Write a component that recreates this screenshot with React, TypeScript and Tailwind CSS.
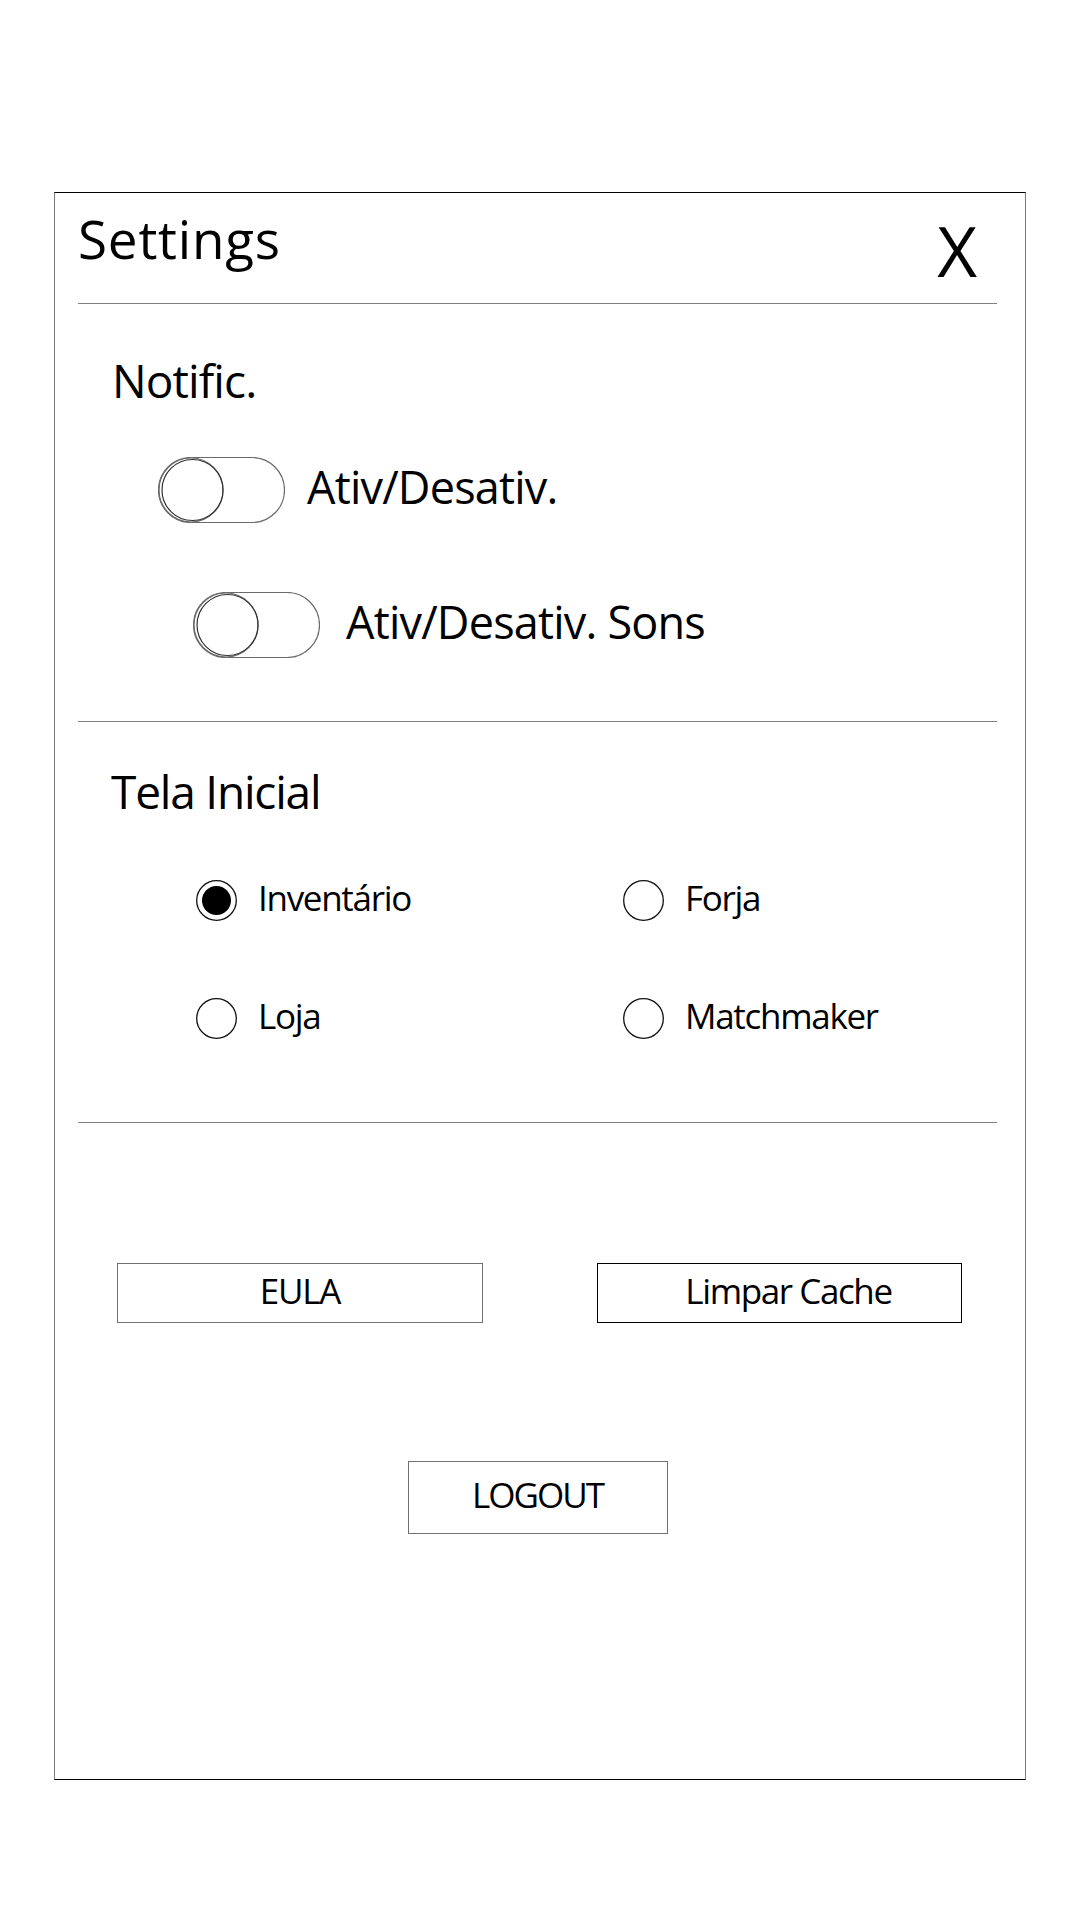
import * as React from 'react'

function Toggle() {
    return (
        <svg width="127" height="66" viewBox="0 0 127 66" fill="none" className="shrink-0">
            <rect x="0.5" y="0.5" width="126" height="65" rx="32.5" stroke="#6b6b6b" strokeWidth="1.2" />
            <circle cx="33" cy="33" r="32" stroke="#6b6b6b" strokeWidth="1.2" />
            <circle cx="34.5" cy="33" r="30.5" stroke="#333333" strokeWidth="1.2" />
        </svg>
    )
}

function Radio({ checked }: { checked?: boolean }) {
    return (
        <svg width="41" height="41" viewBox="0 0 41 41" fill="none" className="shrink-0">
            <circle cx="20.5" cy="20.5" r="19.8" stroke="#111111" strokeWidth="1.3" />
            {checked && <circle cx="20.5" cy="20.5" r="14.5" fill="#000000" />}
        </svg>
    )
}

function RadioOption({ label, checked }: { label: string; checked?: boolean }) {
    return (
        <div className="flex items-center gap-[21px] h-[41px]">
            <Radio checked={checked} />
            <span className="pb-[6px] text-[35px] leading-none text-black tracking-[-1.3px]">{label}</span>
        </div>
    )
}

export default function App() {
    return (
        <div className="min-h-screen bg-white pt-[192px]" style={{ fontFamily: '"Open Sans", "Noto Sans", sans-serif' }}>
            <div className="mx-[54px] h-[1588px] border-x border-x-[#7a7a7a] border-y border-y-black flex flex-col pl-[23px] pr-[28px]">
                {/* header */}
                <div className="h-[110px] flex justify-between">
                    <span className="mt-[19px] text-[53px] leading-none text-black tracking-[0.8px]">Settings</span>
                    <span className="mt-[23px] mr-[20px] text-[69px] leading-none text-black">X</span>
                </div>
                <div className="h-px bg-[#808080]" />

                {/* Notific. */}
                <div className="mt-[53px] ml-[34px] text-[46px] leading-none text-black tracking-[-0.9px]">Notific.</div>
                <div className="mt-[54px] ml-[80px] flex items-center gap-[22px]">
                    <Toggle />
                    <span className="pb-[7px] text-[45px] leading-none text-black tracking-[-0.8px]">Ativ/Desativ.</span>
                </div>
                <div className="mt-[69px] ml-[115px] flex items-center gap-[26px]">
                    <Toggle />
                    <span className="pb-[7px] text-[45px] leading-none text-black tracking-[-0.8px]">Ativ/Desativ. Sons</span>
                </div>
                <div className="mt-[63px] h-px bg-[#808080]" />

                {/* Tela Inicial */}
                <div className="mt-[46px] ml-[33px] text-[46px] leading-none text-black tracking-[-1.2px]">Tela Inicial</div>
                <div className="mt-[66px] ml-[118px] grid grid-cols-[427px_1fr] gap-y-[77px]">
                    <RadioOption label="Inventário" checked />
                    <RadioOption label="Forja" />
                    <RadioOption label="Loja" />
                    <RadioOption label="Matchmaker" />
                </div>
                <div className="mt-[83px] h-px bg-[#808080]" />

                {/* buttons */}
                <div className="mt-[140px] ml-[39px] flex gap-[114px]">
                    <button className="w-[366px] h-[60px] border border-[#707070] flex items-center justify-center pb-[6px] text-[35px] leading-none text-black tracking-[-1.2px]">
                        EULA
                    </button>
                    <button className="w-[365px] h-[60px] border border-black flex items-center justify-center pl-[18px] pb-[6px] text-[35px] leading-none text-black tracking-[-1.4px]">
                        Limpar Cache
                    </button>
                </div>
                <div className="mt-[138px] flex justify-center">
                    <button className="w-[260px] h-[73px] border border-[#707070] flex items-center justify-center pb-[6px] text-[35px] leading-none text-black tracking-[-2px]">
                        LOGOUT
                    </button>
                </div>
            </div>
        </div>
    )
}
